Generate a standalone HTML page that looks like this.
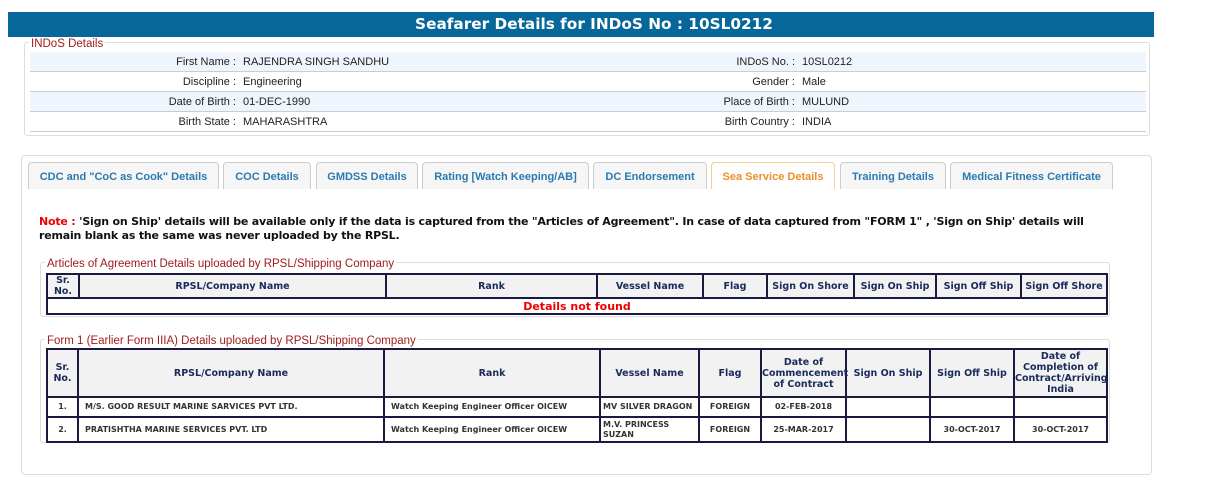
<!DOCTYPE html>
<html><head><meta charset="utf-8"><style>
*{margin:0;padding:0;box-sizing:border-box}
body{width:1205px;height:500px;background:#fff;position:relative;font-family:"Liberation Sans",Arial,sans-serif;overflow:hidden}
.abs{position:absolute}
.hdr{left:8px;top:12px;width:1146px;height:25px;background:#07669a;color:#fff;font:bold 15.3px "DejaVu Sans",sans-serif;text-align:center;line-height:25px;padding-left:26px}
.fs{border:1px solid #ddd;border-radius:3px}
.lg{background:#fff;color:#a01c1c;font-size:11.5px;padding:0 2px;line-height:12px}
.row{position:absolute;left:30px;width:1116px;height:20px;font-size:11px;line-height:20px;color:#222;border-bottom:1px solid #ccc}
.row.a{background:#eef5fc}
.row span{position:absolute}
.l1{right:910px;text-align:right}
.v1{left:213px}
.l2{right:351px;text-align:right}
.v2{left:772px}
.tab{position:absolute;top:162px;height:27px;border:1px solid #ccc;border-bottom:none;border-radius:4px 4px 0 0;background:#f6f6f6;color:#2a7ab0;font-weight:bold;font-size:11px;text-align:center;line-height:28px}
.tab.on{background:#fff;border-color:#eed490;color:#e8902a}
.note{left:39px;top:215px;font:bold 11px "DejaVu Sans",Verdana,sans-serif;line-height:14px;color:#111;white-space:nowrap;letter-spacing:-0.2px}
table{position:absolute;border-collapse:collapse;border:2px solid #1a1a40;table-layout:fixed;font-family:"DejaVu Sans",Verdana,sans-serif}
td,th{border:2px solid #1a1a40;font-size:9.5px;text-align:center;padding:0}
th{background:#f2f2f2;color:#1a2a5a;font-weight:bold;line-height:11px}
td{color:#333;font-weight:bold;font-size:8px;line-height:10px}
</style></head><body>
<div class="abs hdr">Seafarer Details for INDoS No : 10SL0212</div>

<div class="abs fs" style="left:24px;top:42px;width:1126px;height:94px"></div>
<div class="abs lg" style="left:29px;top:38px">INDoS Details</div>
<div class="row a" style="top:52px"><span class="l1">First Name :</span><span class="v1">RAJENDRA SINGH SANDHU</span><span class="l2">INDoS No. :</span><span class="v2">10SL0212</span></div>
<div class="row" style="top:72px"><span class="l1">Discipline :</span><span class="v1">Engineering</span><span class="l2">Gender :</span><span class="v2">Male</span></div>
<div class="row a" style="top:92px"><span class="l1">Date of Birth :</span><span class="v1">01-DEC-1990</span><span class="l2">Place of Birth :</span><span class="v2">MULUND</span></div>
<div class="row" style="top:112px"><span class="l1">Birth State :</span><span class="v1">MAHARASHTRA</span><span class="l2">Birth Country :</span><span class="v2">INDIA</span></div>

<div class="abs fs" style="left:21px;top:155px;width:1131px;height:320px;border-radius:4px"></div>
<div class="tab" style="left:28px;width:191px">CDC and "CoC as Cook" Details</div>
<div class="tab" style="left:223px;width:88px">COC Details</div>
<div class="tab" style="left:316px;width:102px">GMDSS Details</div>
<div class="tab" style="left:422px;width:167px">Rating [Watch Keeping/AB]</div>
<div class="tab" style="left:593px;width:114px">DC Endorsement</div>
<div class="tab on" style="left:711px;width:124px">Sea Service Details</div>
<div class="tab" style="left:840px;width:106px">Training Details</div>
<div class="tab" style="left:950px;width:163px">Medical Fitness Certificate</div>

<div class="abs note"><span style="color:#e00">Note :</span> 'Sign on Ship' details will be available only if the data is captured from the "Articles of Agreement". In case of data captured from "FORM 1" , 'Sign on Ship' details will<br>remain blank as the same was never uploaded by the RPSL.</div>

<div class="abs fs" style="left:40px;top:262px;width:1070px;height:55px"></div>
<div class="abs lg" style="left:45px;top:258px">Articles of Agreement Details uploaded by RPSL/Shipping Company</div>
<table style="left:46px;top:273px;width:1060px">
<colgroup><col style="width:32px"><col style="width:307px"><col style="width:211px"><col style="width:106px"><col style="width:64px"><col style="width:87px"><col style="width:82px"><col style="width:85px"><col style="width:86px"></colgroup>
<tr style="height:24px"><th>Sr.<br>No.</th><th>RPSL/Company Name</th><th>Rank</th><th>Vessel Name</th><th>Flag</th><th>Sign On Shore</th><th>Sign On Ship</th><th>Sign Off Ship</th><th>Sign Off Shore</th></tr>
<tr style="height:16px"><td colspan="9" style="color:#e00;font-size:11px;line-height:13px">Details not found</td></tr>
</table>

<div class="abs fs" style="left:40px;top:339px;width:1070px;height:104px"></div>
<div class="abs lg" style="left:45px;top:335px">Form 1 (Earlier Form IIIA) Details uploaded by RPSL/Shipping Company</div>
<table style="left:46px;top:348px;width:1060px">
<colgroup><col style="width:31px"><col style="width:306px"><col style="width:216px"><col style="width:99px"><col style="width:62px"><col style="width:85px"><col style="width:84px"><col style="width:84px"><col style="width:93px"></colgroup>
<tr style="height:48px"><th>Sr.<br>No.</th><th>RPSL/Company Name</th><th>Rank</th><th>Vessel Name</th><th>Flag</th><th>Date of<br>Commencement<br>of Contract</th><th>Sign On Ship</th><th>Sign Off Ship</th><th>Date of<br>Completion of<br>Contract/Arriving<br>India</th></tr>
<tr style="height:20px"><td>1.</td><td style="text-align:left;padding-left:6px">M/S. GOOD RESULT MARINE SARVICES PVT LTD.</td><td style="text-align:left;padding-left:6px">Watch Keeping Engineer Officer OICEW</td><td style="text-align:left;padding-left:2px">MV SILVER DRAGON</td><td>FOREIGN</td><td>02-FEB-2018</td><td></td><td></td><td></td></tr>
<tr style="height:25px"><td>2.</td><td style="text-align:left;padding-left:6px">PRATISHTHA MARINE SERVICES PVT. LTD</td><td style="text-align:left;padding-left:6px">Watch Keeping Engineer Officer OICEW</td><td style="text-align:left;padding-left:2px">M.V. PRINCESS<br>SUZAN</td><td>FOREIGN</td><td>25-MAR-2017</td><td></td><td>30-OCT-2017</td><td>30-OCT-2017</td></tr>
</table>
</body></html>
